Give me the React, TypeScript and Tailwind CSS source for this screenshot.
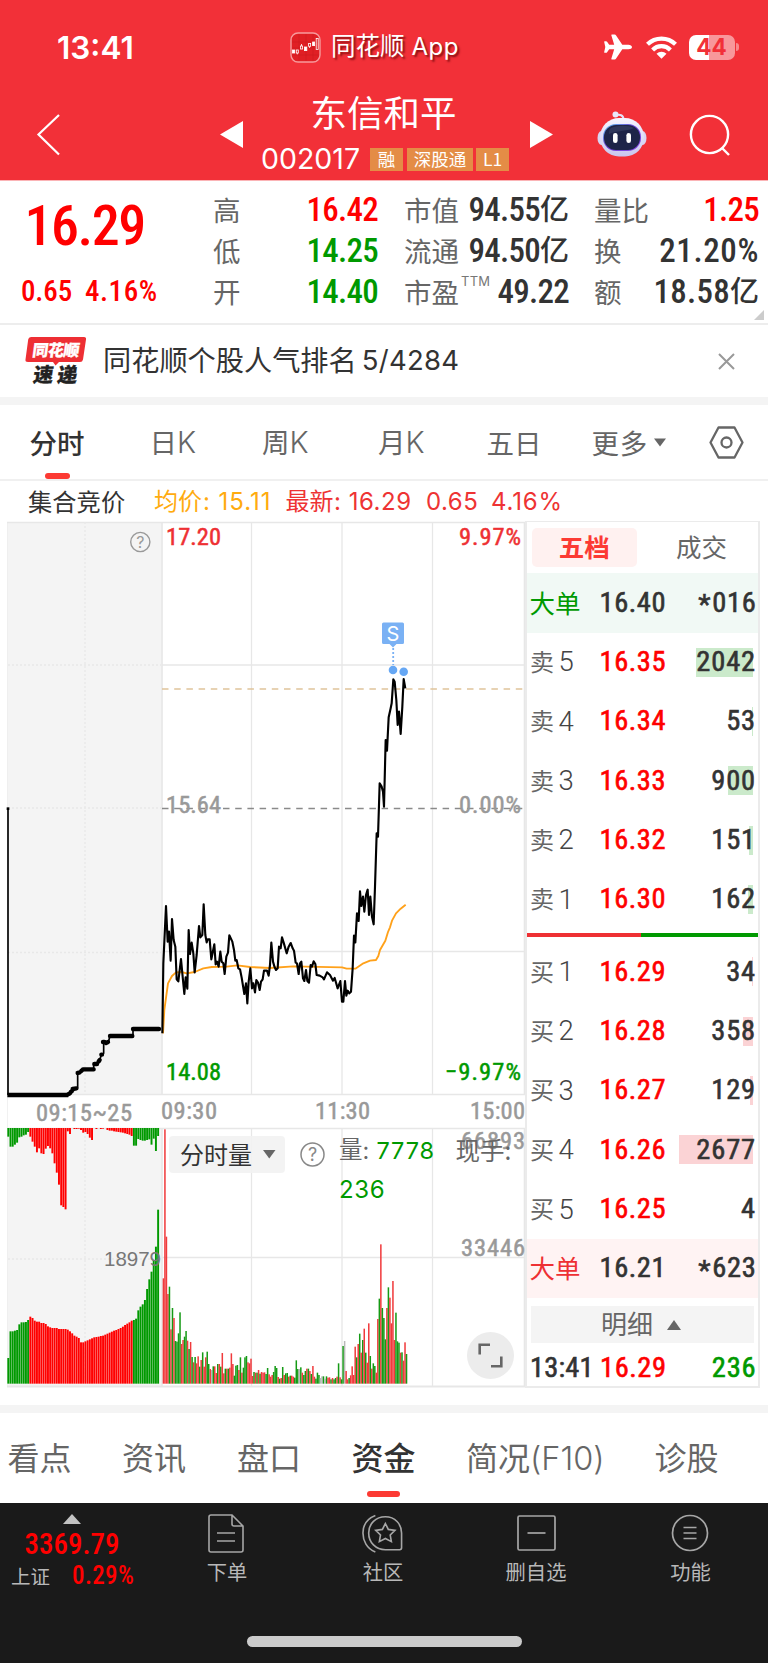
import React from 'react';

const NUM = "[font-family:Roboto,sans-serif] font-stretch-condensed font-medium leading-none whitespace-nowrap";
const BOOK = "[font-family:Roboto,sans-serif] font-stretch-condensed font-normal [-webkit-text-stroke:0.6px_currentColor] leading-none whitespace-nowrap";
const INTER = "[font-family:Inter,sans-serif] leading-none whitespace-nowrap";

/* ---------------------------------------------------------------- header */

function AppBadge() {
  return (
    <svg width="31" height="31" viewBox="0 0 31 31">
      <rect x="1" y="1" width="29" height="29" rx="7" fill="#e01f24" stroke="#f79a9c" strokeWidth="1.4" />
      <path d="M2 10h27M2 16h27M2 23h27M9 2v27M16 2v27M23 2v27" stroke="#c9181d" strokeWidth=".5" />
      <g fill="#fff" stroke="#fff" strokeWidth=".8">
        <rect x="2.500" y="18" width="2.200" height="3" />
        <rect x="6.300" y="18" width="2" height="3" fill="none" />
        <rect x="10.400" y="14" width="2.200" height="3" fill="none" />
        <path d="M11.500 12v2M7.300 21v1.400" />
        <rect x="14.400" y="15" width="2.400" height="3.600" />
        <rect x="18.600" y="11.500" width="2" height="2.800" fill="none" />
        <path d="M19.600 14.400v1.600" />
        <rect x="22.600" y="10" width="2" height="3.600" />
        <rect x="26.200" y="6.500" width="2" height="11" fill="none" />
      </g>
    </svg>
  );
}

function Airplane() {
  return (
    <svg width="28" height="26" viewBox="0 0 28 26" fill="#fff">
      <path d="M28 13c0 1.300-1.500 2.300-3.600 2.300h-6.100l-6.200 9.200c-.4.6-.8 1-1.500 1H8.100c-.6 0-.9-.5-.7-1.100L10.200 15.300H5.200L3.100 18.200c-.3.4-.6.6-1 .6H1c-.6 0-.9-.4-.8-.9L1.300 13 .2 8.100C.1 7.600.4 7.200 1 7.200h1.100c.4 0 .7.200 1 .6l2.100 2.900h5L7.400 1.600C7.200 1 7.500.5 8.100.5h2.500c.7 0 1.100.4 1.500 1l6.200 9.200h6.100c2.100 0 3.600 1 3.600 2.300z" />
    </svg>
  );
}

function Wifi() {
  return (
    <svg width="31" height="23" viewBox="0 0 31 23" fill="none" stroke="#fff" strokeWidth="4.200">
      <path d="M1.500 8.300a20 20 0 0 1 28 0" />
      <path d="M6.600 13.900a12.600 12.600 0 0 1 17.800 0" />
      <path d="M15.500 22.800l-5-5.100a7.200 7.200 0 0 1 10 0z" fill="#fff" stroke="none" />
    </svg>
  );
}

function Battery() {
  return (
    <div className="flex items-center">
      <div className="flex h-[25px] w-[46px] items-center justify-center rounded-[7px] bg-[linear-gradient(90deg,#fff_44%,#f8979b_44%)]">
        <span className={`${INTER} text-[22.500px] font-bold text-[#f23038]`}>44</span>
      </div>
      <div className="ml-[1px] h-[8px] w-[3px] rounded-r-full bg-[#f8878b]" />
    </div>
  );
}

function Robot() {
  return (
    <svg width="50" height="46" viewBox="0 0 50 46">
      <defs>
        <linearGradient id="shell" x1="0" y1="0" x2="0" y2="1">
          <stop offset="0" stopColor="#f6f5ff" />
          <stop offset="1" stopColor="#c9c5ee" />
        </linearGradient>
        <linearGradient id="rim" x1="0" y1="0" x2="1" y2="1">
          <stop offset="0" stopColor="#5cc6f0" />
          <stop offset=".45" stopColor="#6a3fd0" />
          <stop offset="1" stopColor="#8a4be8" />
        </linearGradient>
      </defs>
      <path d="M18 4.500c5-1.500 8.500-.5 8.500 4" fill="none" stroke="#e4e2f8" strokeWidth="2" />
      <circle cx="18.500" cy="3.600" r="3" fill="#e9e7fa" />
      <ellipse cx="4.500" cy="27" rx="4" ry="7" fill="#d8d5f3" />
      <ellipse cx="45.500" cy="27" rx="4" ry="7" fill="#d8d5f3" />
      <rect x="3" y="7" width="44" height="38.500" rx="19" fill="url(#shell)" />
      <rect x="6" y="13" width="38" height="27" rx="13" fill="url(#rim)" />
      <rect x="7" y="14" width="36" height="25" rx="12" fill="#1e2448" />
      <path d="M14 17c7-3 17-3 23 0-8 4-17 2-25 6 0-3 .5-5 2-6z" fill="#3a4268" opacity=".6" />
      <rect x="16" y="22" width="4.600" height="10" rx="2.300" fill="#fff" />
      <rect x="29.400" y="22" width="4.600" height="10" rx="2.300" fill="#fff" />
    </svg>
  );
}

function Tag({ children, w }: { children: React.ReactNode; w: string }) {
  return (
    <span className={`${w} flex h-[23px] items-center justify-center bg-[#e48c46] pb-[1px] text-[17.500px] leading-none text-white`}>
      {children}
    </span>
  );
}

function Header() {
  return (
    <header className="h-[181px] border-b border-[#fbb4b6] bg-[#f23038] text-white">
      <div className="flex h-[94px] items-center">
        <div className={`${INTER} mt-[1px] w-[290px] pl-[57px] text-[31.500px] font-semibold`}>13:41</div>
        <AppBadge />
        <div className="ml-[10px] flex items-center [text-shadow:2px_2px_2px_rgba(90,0,0,0.7)]">
          <span className="-mt-[3px] text-[24.500px] leading-none">同花顺</span>
          <span className={`${INTER} ml-[7px] text-[24px] tracking-[0.02em]`}>App</span>
        </div>
        <div className="mr-[29.500px] ml-auto flex items-center">
          <span className="mr-[14px]"><Airplane /></span>
          <Wifi />
          <span className="ml-[12px]"><Battery /></span>
        </div>
      </div>
      <div className="flex h-[86px]">
        <svg className="mt-[20px] ml-[36px]" width="25" height="42" viewBox="0 0 25 42" fill="none" stroke="#fff" strokeWidth="2.200">
          <path d="M23 1L2.500 20.500 23 40.500" />
        </svg>
        <svg className="mt-[26.500px] ml-[159px]" width="23" height="27" viewBox="0 0 23 27" fill="#fff">
          <path d="M23 0v27L0 13.500z" />
        </svg>
        <div className="ml-[18px] flex w-[250px] flex-col">
          <div className="pl-[49.500px] text-[36.500px] leading-[36px]">东信和平</div>
          <div className="mt-[15px] flex items-center">
            <span className={`${INTER} w-[109px] text-[28.500px]`}>002017</span>
            <Tag w="w-[33px]">融</Tag>
            <span className="w-[4px]" />
            <Tag w="w-[66px]">深股通</Tag>
            <span className="w-[3px]" />
            <Tag w="w-[33px]">L1</Tag>
          </div>
        </div>
        <svg className="mt-[26.500px] ml-[18.500px]" width="23" height="27" viewBox="0 0 23 27" fill="#fff">
          <path d="M0 0v27l23-13.500z" />
        </svg>
        <span className="mt-[16.500px] ml-[44.500px]"><Robot /></span>
        <svg className="mt-[19.500px] ml-[41.500px]" width="42" height="42" viewBox="0 0 42 42" fill="none" stroke="#fff" strokeWidth="2.400">
          <circle cx="20.500" cy="20.500" r="18.600" />
          <path d="M33 34l7 7" />
        </svg>
      </div>
    </header>
  );
}

/* ----------------------------------------------------------------- quote */

function Cell({ label, sup, value, unit, tone, track = "tracking-[-0.022em]" }: { label: string; sup?: string; value: string; unit?: string; tone: string; track?: string }) {
  return (
    <div className="flex h-[41px] items-center justify-between">
      <span className="mt-[1px] flex text-[27.500px] leading-none text-[#666]">
        {label}
        {sup && <span className={`${INTER} -mt-[3px] ml-[2px] text-[13px] tracking-[0.02em] text-[#777]`}>{sup}</span>}
      </span>
      <span className={`flex items-center ${tone}`}>
        <span className={`${NUM} text-[33px] ${track}`}>{value}</span>
        {unit && <span className="-mt-[4px] text-[29px] leading-none font-medium">{unit}</span>}
      </span>
    </div>
  );
}

function Quote() {
  return (
    <section className="flex h-[144px] border-b-2 border-[#ededed] pt-[8px]">
      <div className="w-[213px] text-[#f00]">
        <div className={`${NUM} mt-[9px] pl-[24.500px] text-[56px] tracking-[-0.026em]`}>16.29</div>
        <div className={`${NUM} mt-[23px] flex text-[29px]`}>
          <span className="w-[85px] pl-[21px] tracking-[-0.005em]">0.65</span>
          <span className="tracking-[0.018em]">4.16%</span>
        </div>
      </div>
      <div className="w-[165px]">
        <Cell label="高" value="16.42" tone="text-[#f00]" />
        <Cell label="低" value="14.25" tone="text-[#009900]" />
        <Cell label="开" value="14.40" tone="text-[#009900]" />
      </div>
      <div className="ml-[26px] w-[165px]">
        <Cell label="市值" value="94.55" unit="亿" tone="text-[#333]" />
        <Cell label="流通" value="94.50" unit="亿" tone="text-[#333]" />
        <Cell label="市盈" sup="TTM" value="49.22" tone="text-[#333]" />
      </div>
      <div className="ml-[25px] w-[165px]">
        <Cell label="量比" value="1.25" tone="text-[#f00]" />
        <Cell label="换" value="21.20%" tone="text-[#333]" track="tracking-[0.018em]" />
        <Cell label="额" value="18.58" unit="亿" tone="text-[#333]" track="tracking-[0.008em]" />
      </div>
      <svg className="-ml-[5px] mb-[3px] shrink-0 self-end" width="10" height="10" viewBox="0 0 10 10">
        <path d="M10 0v10H0z" fill="#ccc" />
      </svg>
    </section>
  );
}

/* ------------------------------------------------------------------ news */

function NewsLogo() {
  return (
    <svg className="overflow-visible" width="62" height="50" viewBox="0 0 62 50">
      <path d="M6 1h53q2.500 0 2 2.500l-3 20q-.5 2.500-3 2.500H34l-3.500 3.500L28 26H3q-3 0-2.500-2.500l2.700-20Q3.500 1 6 1z" fill="#ee2f34" />
      <g transform="skewX(-8)" fontFamily="Noto Sans CJK SC" fontWeight="900">
        <text x="9.500" y="20" fontSize="16" fill="#fff" stroke="#fff" strokeWidth=".3" textLength="47">同花顺</text>
        <text x="14" y="46.500" fontSize="20" fill="#222" stroke="#222" strokeWidth=".3" textLength="44">速递</text>
      </g>
    </svg>
  );
}

function News() {
  return (
    <section className="flex h-[80px] items-center border-b-8 border-[#f4f4f4] pl-[25px] text-[#333]">
      <NewsLogo />
      <span className="-mt-[3px] ml-[16px] text-[28.200px] leading-none">同花顺个股人气排名</span>
      <span className={`${INTER} ml-[5px] text-[27.500px] tracking-[0.01em]`}>5/4284</span>
      <svg className="mr-[33px] ml-auto" width="17" height="17" viewBox="0 0 17 17" stroke="#999" strokeWidth="2">
        <path d="M1 1l15 15M16 1L1 16" />
      </svg>
    </section>
  );
}

/* ------------------------------------------------------------------ tabs */

const K = <span className="text-[29.500px] leading-none font-light [font-family:Inter,sans-serif]">K</span>;

function PeriodTabs() {
  return (
    <nav className="flex h-[76px] border-b-2 border-[#f0f0f0] text-[27.500px] leading-none text-[#666]">
      <div className="flex w-[149.500px] flex-col pl-[29.500px]">
        <span className="mt-[23.500px] font-medium text-[#333]">分时</span>
        <span className="mt-[17px] ml-[15.500px] h-[6.500px] w-[25px] rounded-full bg-[#fc3a33]" />
      </div>
      <span className="mt-[22.500px] w-[112.500px]">日{K}</span>
      <span className="mt-[22.500px] w-[116px]">周{K}</span>
      <span className="mt-[22.500px] w-[108.500px]">月{K}</span>
      <span className="mt-[23.500px] w-[105px]">五日</span>
      <span className="mt-[23.500px] tracking-[0.03em]">更多</span>
      <svg className="mt-[32.500px] ml-[6px]" width="12" height="9" viewBox="0 0 12 9"><path d="M0 .5h12L6 8.500z" fill="#666" /></svg>
      <svg className="mt-[21px] mr-[24px] ml-auto" width="35" height="33" viewBox="0 0 35 33" fill="none" stroke="#666" strokeWidth="2.300">
        <path d="M9.500 1.500h16L33.500 16.500l-8 15h-16l-8-15z" strokeLinejoin="round" />
        <circle cx="17.500" cy="16.500" r="5" />
      </svg>
    </nav>
  );
}

function InfoRow() {
  return (
    <div className="flex h-[41px] items-center text-[24px] leading-none text-[#e33]">
      <span className="w-[154px] pl-[28px] text-[24.300px] text-[#333]">集合竞价</span>
      <span className="-mt-[3px] w-[49px] text-[#ffab0f]">均价</span>
      <span className={`${INTER} w-[82.500px] text-[24px] tracking-[0.04em] text-[#ffab0f]`}>: 15.11</span>
      <span className="-mt-[3px] w-[48.500px]">最新</span>
      <span className={`${INTER} w-[92px] text-[24px] tracking-[0.022em]`}>: 16.29</span>
      <span className={`${INTER} w-[65px] text-[24px] tracking-[0.02em]`}>0.65</span>
      <span className={`${INTER} text-[24px] tracking-[0.035em]`}>4.16%</span>
    </div>
  );
}

/* ----------------------------------------------------------------- chart */

const PRICE =
  "37,1180 40,970 48,798 53,905 57,875 62,962 66,837 71,900 76,920 80,1018 85,1024 93,957 97,1000 103,1062 107,1012 112,1046 116,870 120,942 125,908 130,940 134,997 140,945 147,858 151,892 157,885 161,793 166,885 170,907 173,898 179,898 184,958 193,913 197,973 201,965 206,980 211,935 215,965 220,970 224,1002 229,950 234,938 238,886 247,905 252,930 256,962 260,960 265,985 270,988 275,1013 283,1062 288,1030 292,1090 296,1025 301,985 306,1045 310,1030 315,1057 319,1020 324,1028 329,1050 333,1025 338,1018 342,992 351,992 356,1007 360,975 364,908 369,965 374,982 378,990 383,985 387,920 392,925 396,892 401,908 410,940 416,920 422,909 428,925 432,932 437,968 441,970 446,1002 450,970 454,965 459,1015 463,1023 468,990 472,1023 477,1028 482,975 486,980 491,964 496,972 500,1005 509,1007 518,1012 522,1018 531,997 540,1005 549,1022 554,1014 563,1045 571,1023 576,1085 580,1085 585,1023 589,1067 593,1052 598,1060 603,1055 608,985 612,887 616,907 621,820 626,843 630,754 634,798 639,770 643,815 648,765 653,749 657,825 661,770 666,830 671,853 675,740 680,580 684,590 689,430 695,440 699,455 702,500 707,300 711,332 716,232 722,205 725,190 730,118 734,125 739,180 743,255 747,215 752,282 757,200 761,117 766,145";

const AVERAGE =
  "39,1180 43,1110 54,1030 66,1008 78,997 94,996 110,1000 134,996 160,985 185,981 230,980 262,976 300,981 360,984 430,979 576,982 590,986 616,986 640,970 660,962 678,960 685,948 690,930 706,902 714,876 720,862 726,842 738,820 752,806 767,794";

const VOLUME =
  "505r 58r 380r 552r 530g 658r 594g 624r 693g 695g 670g 607g 702r 690r 680g 663g 692r 717g 696r 741g 757r 741g 760r 739r 770g 750r 727g 770r 742r 725g 762g 777r 780x 769g 769r 789r 762g 762r 770g 729r 790r 776g 776r 776g 773r 730r 762r 797g 767g 765g 780r 742g 788r 773g 742g 738g 757r 760r 746r 798r 786g 788r 788g 780r 791g 786r 788r 787r 792g 774g 793r 800r 795r 786g 768g 774g 801r 806g 804r 771g 795r 790g 789g 800r 797g 797r 800r 803g 751g 777g 777x 772g 788r 795g 783g 776r 776g 783r 792g 768r 800r 806g 788g 795g 804x 799x 799g 806x 799g 803r 802r 808g 804r 808g 804g 800r 760g 802r 808g 708g 693x 783r 808r 804g 796r 769r 795r 710r 742g 702r 671g 728r 690g 656r 728g 758r 640r 738g 776r 760g 768g 788r 627r 566g 403r 594g 624g 688g 594r 532g 563r 640r 513r 690r 608g 694g 698g 728r 727g 752r 697r 732g";

const BAR_COLOR: Record<string, string> = { r: "#f03a3c", g: "#159a15", x: "#b9b9b9" };

const AUCTION_MATCHED = [
  744, 664, 664, 662, 660, 643, 637, 637, 636, 630, 620, 624, 632, 635, 635, 639, 639, 642, 649, 652, 654, 654, 654, 657, 657, 657,
  657, 659, 664, 670, 677, 680, 684, 697, 697, 694, 691, 688, 685, 682, 681, 680, 678, 677, 674, 671, 668, 665, 662, 660, 657, 654,
  650, 645, 641, 637, 632, 630, 626, 601, 590, 583, 570, 537, 508, 485, 450, 410, 299,
];

const AUCTION_UNMATCHED = [
  80, 110, 110, 104, 98, 82, 80, 76, 74, 66, 80, 95, 110, 127, 115, 130, 132, 116, 108, 115, 130, 160, 188, 224, 286, 291, 298, 64,
  72, 54, 57, 57, 56, 60, 68, 66, 72, 83, 90, 54, 57, 54, 57, 56, 54, 60, 62, 62, 64, 65, 66, 67, 68, 70, 72, 74, 78, 107, 107, 87,
  90, 92, 92, 90, 88, 104, 86, 123, 78,
];

const STEPS = "205,640 215,632 228,625 233,624 233,578 243,576 249,568 281,567 281,552 292,548 300,538 304,524 311,520 311,486 325,486 330,468 399,468 399,447 480,447";

function Chart() {
  const volume = VOLUME.split(" ");
  const axis = { fontFamily: "Roboto", fontWeight: 400, fontSize: 24.5, lengthAdjust: "spacingAndGlyphs" as const, strokeWidth: 0.5 };
  const isGreen = (i: number) => i < 10 || i > 56;
  return (
    <svg className="block font-stretch-condensed" width="525" height="867" viewBox="0 521 525 867">
      <rect x="7.500" y="522" width="154" height="572.500" fill="#f4f4f4" />
      <rect x="7.500" y="1128" width="154" height="258" fill="#f4f4f4" />
      <g stroke="#e7e7e7" strokeWidth="1.300">
        <path d="M7 522.500H525M7 1094.500H525M7 1128.500H525M162 665H525M162 951.500H525M162 1257.500H525" />
        <path d="M251.500 522V1094M342 522V1094M432.500 522V1094M251.500 1128V1386M342 1128V1386M432.500 1128V1386" />
        <path d="M7 1386.500H525" strokeWidth="2" />
        <path d="M7.500 522V1386" strokeWidth=".6" />
        <path d="M162 522V1094M162 1128V1386M524.500 522V1094M524.500 1128V1386" strokeWidth="1.600" />
      </g>
      <path d="M85 522V1094M85 1128V1384M8 665H161M8 808H161M8 952.500H161M8 1259H161" stroke="#e8e8e8" strokeWidth="1.400" strokeDasharray="2 2" />

      <g transform="translate(0 1110) scale(.33333)">
        {AUCTION_MATCHED.map((top, i) => (
          <rect key={i} x={22 + i * 6.61} y={top} width="5.800" height={821 - top} fill={isGreen(i) ? "#009900" : "#ff0000"} />
        ))}
        {AUCTION_UNMATCHED.map((end, i) => (
          <rect key={i} x={22 + i * 6.61} y="54" width="5.800" height={end - 54} fill={isGreen(i) ? "#009900" : "#ff0000"} />
        ))}
      </g>
      <g transform="translate(150 1110) scale(.33333)">
        {volume.map((bar, i) => {
          const top = parseInt(bar, 10);
          return <rect key={i} x={38 + i * 4.53} y={top} width="4.530" height={821 - top} fill={BAR_COLOR[bar.slice(-1)]} />;
        })}
      </g>

      <path d="M162 689H524" stroke="#dfc49a" strokeWidth="1.600" strokeDasharray="6.500 5.700" />
      <path d="M162 808.500H524" stroke="#8a8a8a" strokeWidth="1.300" strokeDasharray="6.500 5.700" />

      <g transform="translate(150 640) scale(.33333)" fill="none" strokeLinejoin="round">
        <polyline points={AVERAGE} stroke="#ffa11a" strokeWidth="5.600" />
        <polyline points={PRICE} stroke="#000" strokeWidth="6.400" />
      </g>
      <g transform="translate(0 880) scale(.33333)" fill="none" stroke="#000" strokeLinejoin="round">
        <path d="M24 -216V645" strokeWidth="5" />
        <path d="M20 -214h8" strokeWidth="8" />
        <polyline points={STEPS} strokeWidth="5" />
        <path d="M22 645H205" strokeWidth="13" />
        <path
          d="M204 643l6-3M212 636l4-3M218 627l11-2M233 579l5-1M243 574l4-4M249 568H281M283 552h8M296 544l3-4M304 524h2M309 486h4M318 489l6-3M330 468H397M399 447H477"
          strokeWidth="13"
          strokeLinecap="round"
        />
      </g>

      <path d="M383.500 622.500h19q1.500 0 1.500 1.500v18.500q0 1.500-1.500 1.500h-6l-3.500 3.500-3.500-3.500h-6q-1.500 0-1.500-1.500V624q0-1.500 1.500-1.500z" fill="#7ab1f4" />
      <text x="393" y="640.500" textAnchor="middle" fontFamily="Inter" fontSize="20" fill="#fff">S</text>
      <path d="M393.200 648V665" stroke="#7ab1f4" strokeWidth="1.800" strokeDasharray="2 2" />
      <circle cx="393" cy="670" r="4.300" fill="#66a7f4" />
      <circle cx="403.700" cy="671.700" r="4.300" fill="#66a7f4" />

      <g {...axis}>
        <g fill="#ee3033" stroke="#ee3033">
          <text x="166" y="545.300" textLength="55">17.20</text>
          <text x="459" y="545.300" textLength="62">9.97%</text>
        </g>
        <g fill="#009900" stroke="#009900">
          <text x="166" y="1080" textLength="55">14.08</text>
          <text x="445" y="1080" textLength="76">−9.97%</text>
        </g>
        <g fill="#999" stroke="#999">
          <text x="166" y="812.500" textLength="55">15.64</text>
          <text x="459" y="812.500" textLength="62">0.00%</text>
          <text x="36" y="1121" textLength="96">09:15~25</text>
          <text x="161" y="1119" textLength="56">09:30</text>
          <text x="315" y="1119" textLength="55">11:30</text>
          <text x="470" y="1119" textLength="55">15:00</text>
          <text x="461" y="1148.500" textLength="64">66893</text>
          <text x="461" y="1256" textLength="64">33446</text>
        </g>
      </g>
      <text x="104" y="1265.500" textLength="57" fontFamily="Liberation Sans" fontSize="20.500" fill="#777">18979</text>

      <circle cx="140.300" cy="542" r="9.600" fill="none" stroke="#999" strokeWidth="1.400" />
      <text x="140.300" y="548" textAnchor="middle" fontFamily="Inter" fontSize="16" fill="#999">?</text>
    </svg>
  );
}

function VolumeControls() {
  return (
    <div className="absolute top-[607px] left-[162px] flex h-[256px] w-[363px] flex-col justify-between">
      <div className="flex pt-[8px] pl-[7px]">
        <div className="flex h-[36.500px] w-[116px] items-center rounded-[4px] bg-[#f2f2f2]/90 pl-[11px]">
          <span className="-mt-[1px] text-[24px] leading-none text-[#333]">分时量</span>
          <svg className="ml-[11px]" width="12.500" height="8.500" viewBox="0 0 12 8"><path d="M0 0h12L6 8z" fill="#666" /></svg>
        </div>
        <svg className="mt-[5.500px] ml-[14.500px]" width="25" height="25" viewBox="0 0 25 25">
          <circle cx="12.500" cy="12.500" r="11.500" fill="none" stroke="#888" strokeWidth="1.500" />
          <text x="12.500" y="19" textAnchor="middle" fontFamily="Inter" fontSize="18" fill="#888">?</text>
        </svg>
        <div className="ml-[14.500px] w-[185px]">
          <div className="flex h-[29px] items-center">
            <span className="-mt-[3px] text-[23.500px] leading-none text-[#666]">量</span>
            <span className={`${INTER} mt-[1px] w-[14px] text-[23.500px] text-[#666]`}>:</span>
            <span className={`${INTER} mt-[1px] w-[79px] text-[23.500px] tracking-[0.035em] text-[#009900]`}>7778</span>
            <span className="-mt-[1px] text-[24.500px] leading-none text-[#666]">现手:</span>
          </div>
          <div className={`${INTER} mt-[13px] text-[24px] tracking-[0.025em] text-[#009900]`}>236</div>
        </div>
      </div>
      <div className="mr-[11px] mb-[5px] flex size-[47px] items-center justify-center self-end rounded-full bg-[#ececec]">
        <svg width="25" height="25" viewBox="0 0 25 25" fill="none" stroke="#666" strokeWidth="2.600">
          <path d="M1.700 11.500V1.700H12M23.300 13.500v9.800H13" />
        </svg>
      </div>
    </div>
  );
}

/* ------------------------------------------------------------ order book */

function BookRow({ name, level, price, size, bar, side }: { name: string; level: number; price: string; size: string; bar: string; side: "ask" | "bid" }) {
  return (
    <div className="flex h-[59.350px] items-center pl-[3px]">
      <span className="-mt-[2.500px] text-[24px] leading-none text-[#666]">{name}</span>
      <span className="w-[45.500px] pl-[4.500px] text-[27.500px] leading-none font-light text-[#444] [font-family:Roboto,sans-serif]">{level}</span>
      <span className={`${BOOK} w-[80px] text-[28.500px] tracking-[0.02em] text-[#f00]`}>{price}</span>
      <span className="relative flex h-[29px] w-[76.500px] items-center justify-end">
        <span className={`${bar} absolute top-0 right-[3px] h-full ${side === "ask" ? "bg-[#cbeacb]" : "bg-[#fbd3d5]"}`} />
        <span className={`${BOOK} relative text-[28.500px] tracking-[0.03em] text-[#333]`}>{size}</span>
      </span>
    </div>
  );
}

function BigOrder({ price, size, tone, bg }: { price: string; size: string; tone: string; bg: string }) {
  return (
    <div className={`flex h-[59.500px] items-center pl-[2.500px] ${bg}`}>
      <span className={`-mt-[3px] w-[70px] text-[25.500px] leading-none ${tone}`}>大单</span>
      <span className={`${BOOK} w-[80.500px] text-[28.500px] tracking-[0.02em] text-[#333]`}>{price}</span>
      <span className={`${BOOK} flex w-[76.500px] items-center justify-end text-[28.500px] tracking-[0.025em] text-[#333]`}>
        <span className="mt-[5px] mr-[1px]">*</span>{size}
      </span>
    </div>
  );
}

function OrderBook() {
  return (
    <aside className="h-[867px] w-[235px] border-t border-r-2 border-b-2 border-l-2 border-[#ebebeb]">
      <div className="flex h-[51px] items-center pl-[4.500px] text-[25.500px] leading-none">
        <span className="flex h-[38.500px] w-[105.500px] items-center justify-center rounded-[5px] bg-[#fff1f0] pb-[4px] font-bold text-[#fc3a33]">五档</span>
        <span className="ml-[39px] pb-[4px] text-[#666]">成交</span>
      </div>
      <BigOrder price="16.40" size="016" tone="text-[#009900]" bg="bg-[#f1f9f5]" />
      <BookRow side="ask" name="卖" level={5} price="16.35" size="2042" bar="w-[57px]" />
      <BookRow side="ask" name="卖" level={4} price="16.34" size="53" bar="w-[1px]" />
      <BookRow side="ask" name="卖" level={3} price="16.33" size="900" bar="w-[25px]" />
      <BookRow side="ask" name="卖" level={2} price="16.32" size="151" bar="w-[4px]" />
      <BookRow side="ask" name="卖" level={1} price="16.30" size="162" bar="w-[5px]" />
      <div className="mt-[4px] mb-[5px] flex h-[4px]">
        <span className="w-[114px] bg-[#ee3033]" />
        <span className="flex-1 bg-[#009900]" />
      </div>
      <BookRow side="bid" name="买" level={1} price="16.29" size="34" bar="w-[1px]" />
      <BookRow side="bid" name="买" level={2} price="16.28" size="358" bar="w-[10px]" />
      <BookRow side="bid" name="买" level={3} price="16.27" size="129" bar="w-[3px]" />
      <BookRow side="bid" name="买" level={4} price="16.26" size="2677" bar="w-[74px]" />
      <BookRow side="bid" name="买" level={5} price="16.25" size="4" bar="w-0" />
      <BigOrder price="16.21" size="623" tone="text-[#ee3033]" bg="bg-[#fff3f3]" />
      <div className="mt-[8px] ml-[4px] flex h-[36.500px] w-[223px] items-center bg-[#f4f4f4] pl-[70px]">
        <span className="-mt-[3px] text-[26px] leading-none text-[#666]">明细</span>
        <svg className="ml-[14px]" width="14" height="10" viewBox="0 0 14 10"><path d="M0 10h14L7 0z" fill="#666" /></svg>
      </div>
      <div className="flex h-[51px] items-center pl-[3px]">
        <span className={`${BOOK} w-[70px] text-[28.500px] tracking-[0.005em] text-[#333]`}>13:41</span>
        <span className={`${BOOK} w-[80px] text-[28.500px] tracking-[0.02em] text-[#f00]`}>16.29</span>
        <span className={`${BOOK} w-[76.500px] text-right text-[28.500px] tracking-[0.03em] text-[#009900]`}>236</span>
      </div>
    </aside>
  );
}

/* ---------------------------------------------------------------- bottom */

function SectionTabs() {
  return (
    <nav className="mt-[17px] flex h-[98px] border-t-8 border-[#f4f4f4] text-[32px] leading-none whitespace-nowrap text-[#666]">
      <span className="w-[115px] pt-[27px] pl-[7.500px]">看点</span>
      <span className="w-[115px] pt-[27px] pl-[7px]">资讯</span>
      <span className="w-[121px] pt-[27px] pl-[7px]">盘口</span>
      <div className="flex w-[115px] flex-col">
        <span className="pt-[27px] pl-[0.500px] font-medium text-[#333]">资金</span>
        <span className="mt-[19px] ml-[16px] h-[6px] w-[33px] rounded-full bg-[#fc3a33]" />
      </div>
      <span className="w-[188.500px] pt-[26.500px]">简况<span className="text-[32.500px] font-light [font-family:Inter,sans-serif]">(F10)</span></span>
      <span className="pt-[27px]">诊股</span>
    </nav>
  );
}

function DockItem({ label, w, icon }: { label: string; w: string; icon: React.ReactNode }) {
  return (
    <div className={`${w} flex flex-col items-center`}>
      <div className="-ml-[2px] flex h-[60px] items-center">{icon}</div>
      <span className="-mt-[2px] text-[20.300px] leading-none text-[#b8b8b8]">{label}</span>
    </div>
  );
}

function Dock() {
  return (
    <footer className="flex h-[160px] flex-col bg-[#1a1a1a]">
      <div className="flex h-[133px]">
        <div className="flex w-[145px] flex-col text-[#f00]">
          <svg className="mt-[11px] ml-[63px]" width="18" height="10" viewBox="0 0 18 10"><path d="M0 10h18L9 0z" fill="#c2c2c2" /></svg>
          <span className={`${NUM} mt-[6px] pl-[24.500px] text-[29px]`}>3369.79</span>
          <div className="mt-[4px] flex items-center">
            <span className="w-[72px] pl-[11px] text-[19.500px] leading-none text-[#b8b8b8]">上证</span>
            <span className={`${NUM} text-[25px] tracking-[0.015em]`}>0.29%</span>
          </div>
        </div>
        <DockItem
          w="w-[164px]"
          label="下单"
          icon={
            <svg width="36" height="39" viewBox="0 0 36 39" fill="none" stroke="#a6a6a6" strokeWidth="1.600">
              <path d="M24 1H3Q1 1 1 3v33q0 2 2 2h30q2 0 2-2V12zM24 1v9q0 2 2 2h9M9 19h18M9 27h18" />
            </svg>
          }
        />
        <DockItem
          w="w-[148px]"
          label="社区"
          icon={
            <svg width="41" height="39" viewBox="0 0 43 40" fill="none" stroke="#a6a6a6" strokeWidth="1.700">
              <path d="M14 1C5 4.500 1 11.500 1 19.500S5 36 14 39.500" />
              <path d="M24.500 2.500c10 0 17 7.500 17 17v15.500q0 2-2 2h-15c-10 0-17.500-7.500-17.500-17.500s7.500-17 17.500-17z" />
              <path d="M24.500 9.500l3.100 6.200 7 1-5 4.900 1.200 6.900-6.300-3.300-6.300 3.300 1.200-6.900-5-4.900 7-1z" />
            </svg>
          }
        />
        <DockItem
          w="w-[158px]"
          label="删自选"
          icon={
            <svg className="ml-[3px]" width="39" height="36" viewBox="0 0 39 36" fill="none" stroke="#a6a6a6" strokeWidth="1.700">
              <rect x="1" y="1" width="37" height="34" rx="1.500" />
              <path d="M10.500 18h18" />
            </svg>
          }
        />
        <DockItem
          w="w-[151px]"
          label="功能"
          icon={
            <svg width="38" height="38" viewBox="0 0 38 38" fill="none" stroke="#a6a6a6" strokeWidth="1.700">
              <circle cx="19" cy="19" r="17.500" />
              <path d="M12.500 13.500h13M12.500 19h13M12.500 24.500h13" />
            </svg>
          }
        />
      </div>
      <div className="ml-[247px] h-[11px] w-[275px] rounded-full bg-[#cbcbcb]" />
    </footer>
  );
}

export default function App() {
  return (
    <div className="h-[1663px] w-[768px] overflow-hidden bg-white [font-family:'Noto_Sans_CJK_SC',sans-serif]">
      <Header />
      <Quote />
      <News />
      <PeriodTabs />
      <InfoRow />
      <div className="relative -mt-[1px] flex">
        <Chart />
        <VolumeControls />
        <OrderBook />
      </div>
      <SectionTabs />
      <Dock />
    </div>
  );
}
